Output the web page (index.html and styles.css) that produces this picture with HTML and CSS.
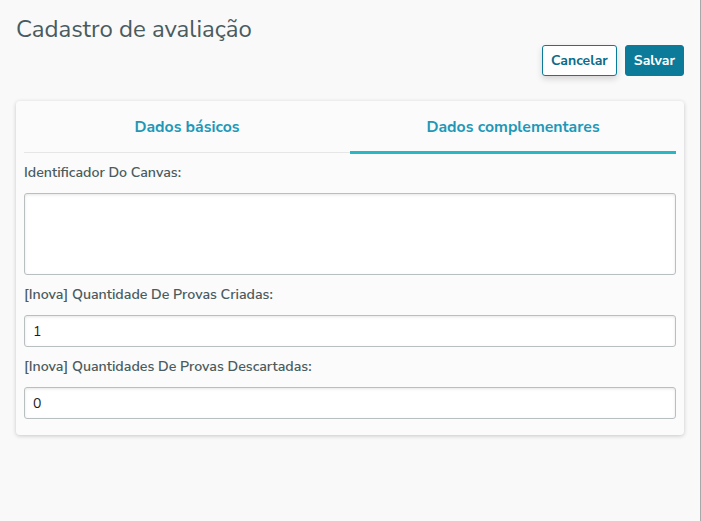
FILE: index.html
```html
<!DOCTYPE html>
<html lang="pt">
<head>
<meta charset="utf-8">
<title>Cadastro de avaliação</title>
<link rel="stylesheet" href="styles.css">
</head>
<body>
<div class="page">
  <h1 class="title">Cadastro de avaliação</h1>
  <div class="actions">
    <button class="btn btn-secondary">Cancelar</button>
    <button class="btn btn-primary">Salvar</button>
  </div>
  <div class="card">
    <div class="tabs">
      <div class="tab">Dados básicos</div>
      <div class="tab active">Dados complementares</div>
    </div>
    <div class="field">
      <label class="label">Identificador Do Canvas:</label>
      <textarea class="control textarea"></textarea>
    </div>
    <div class="field">
      <label class="label">[Inova] Quantidade De Provas Criadas:</label>
      <input class="control input" value="1">
    </div>
    <div class="field">
      <label class="label">[Inova] Quantidades De Provas Descartadas:</label>
      <input class="control input" value="0">
    </div>
  </div>
</div>
</body>
</html>
```
FILE: styles.css
```css
html, body {
  margin: 0;
  height: 100%;
}
body {
  background: #f9f9f9;
  font-family: "Nunito Sans", Lato, "Open Sans", sans-serif;
  color: #4a5c60;
}
.page {
  box-sizing: border-box;
  width: 701px;
  height: 100%;
  border-right: 1px solid #a8a8a8;
  padding: 14px 16px 0 16px;
}
.title {
  margin: 0;
  font-size: 24px;
  line-height: 30px;
  font-weight: 400;
  color: #4a5b5f;
}
.actions {
  display: flex;
  justify-content: flex-end;
  gap: 8px;
  margin-top: 1px;
}
.btn {
  height: 31px;
  padding: 0 8px;
  border-radius: 3px;
  font-family: inherit;
  font-size: 14px;
  font-weight: 700;
  cursor: pointer;
}
.btn-secondary {
  background: #ffffff;
  color: #0c6c88;
  border: 1px solid #0c7b9a;
  box-shadow: 0 3px 6px rgba(0, 0, 0, 0.15);
}
.btn-primary {
  background: #0c7b9a;
  color: #ffffff;
  border: 1px solid #0c7b9a;
}
.card {
  margin-top: 25px;
  background: #fbfbfb;
  border-radius: 4px;
  box-shadow: 0 1px 4px rgba(0, 0, 0, 0.2);
  padding: 0 8px 16px;
}
.tabs {
  display: flex;
  height: 51px;
  border-bottom: 1px solid #e6e6e6;
}
.tab {
  flex: 1;
  display: flex;
  align-items: center;
  justify-content: center;
  font-size: 15.8px;
  font-weight: 700;
  color: #1f98b8;
  padding-top: 1px;
}
.tab.active {
  border-bottom: 3px solid #29b6c5;
  margin-bottom: -2px;
}
.field {
  display: flex;
  flex-direction: column;
}
.label {
  margin-top: 10px;
  font-size: 14.2px;
  line-height: 20px;
  font-weight: 600;
  color: #4a5c60;
}
.control {
  box-sizing: border-box;
  margin-top: 10px;
  width: 100%;
  background: #ffffff;
  border: 1px solid #b9bfc0;
  border-radius: 3px;
  box-shadow: inset 0 1px 3px rgba(0, 0, 0, 0.1);
  font-family: inherit;
  font-size: 14px;
  color: #1c1c1c;
  padding: 0 8px;
  outline: none;
}
.textarea {
  display: block;
  height: 82px;
  resize: none;
}
.input {
  display: block;
  height: 32px;
}
```
